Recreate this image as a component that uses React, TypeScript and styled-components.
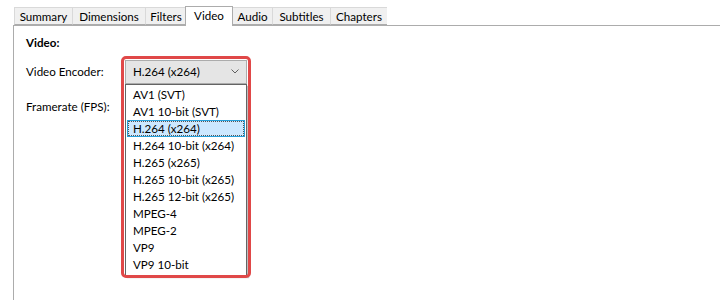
import React, { FC } from "react";
import styled, { createGlobalStyle } from "styled-components";

const encoders = [
  "AV1 (SVT)",
  "AV1 10-bit (SVT)",
  "H.264 (x264)",
  "H.264 10-bit (x264)",
  "H.265 (x265)",
  "H.265 10-bit (x265)",
  "H.265 12-bit (x265)",
  "MPEG-4",
  "MPEG-2",
  "VP9",
  "VP9 10-bit",
];

const tabs = [
  { label: "Summary", width: 58 },
  { label: "Dimensions", width: 73 },
  { label: "Filters", width: 41 },
  { label: "Video", width: 46 },
  { label: "Audio", width: 40 },
  { label: "Subtitles", width: 58 },
  { label: "Chapters", width: 57 },
];

const App: FC = () => {
  return (
    <>
      <GlobalStyle />
      <Window>
        <TabStrip>
          {tabs.map((t) => (
            <Tab key={t.label} $width={t.width} $active={t.label === "Video"}>
              {t.label}
            </Tab>
          ))}
        </TabStrip>
        <Panel>
          <SectionTitle>Video:</SectionTitle>
          <Form>
            <Label>Video Encoder:</Label>
            <EncoderCell>
              <Combo>
                <span>H.264 (x264)</span>
                <svg width="8" height="5" viewBox="0 0 8 5">
                  <path d="M0.5 0.5 L4 4 L7.5 0.5" fill="none" stroke="#606060" strokeWidth="1" />
                </svg>
              </Combo>
              <DropList>
                {encoders.map((e) => (
                  <Option key={e} $selected={e === "H.264 (x264)"}>
                    {e}
                  </Option>
                ))}
              </DropList>
              <Highlight />
            </EncoderCell>
            <Label>Framerate (FPS):</Label>
            <div />
          </Form>
        </Panel>
      </Window>
    </>
  );
};

const GlobalStyle = createGlobalStyle`
  body {
    margin: 0;
    background: #ffffff;
    font-family: "Segoe UI", Lato, "Noto Sans", sans-serif;
    font-size: 11.6px;
    color: #000000;
  }
`;

const Window = styled.div`
  width: 720px;
  height: 300px;
  overflow: hidden;
  padding-top: 6px;
  box-sizing: border-box;
`;

const TabStrip = styled.div`
  display: flex;
  align-items: flex-end;
  padding-left: 14px;
  height: 19px;
  position: relative;
  z-index: 1;
`;

const Tab = styled.div<{ $width: number; $active?: boolean }>`
  box-sizing: border-box;
  width: ${(p) => p.$width + (p.$active ? 2 : 0)}px;
  height: ${(p) => (p.$active ? 20 : 18)}px;
  margin: ${(p) => (p.$active ? "0 -1px -1px" : "0")};
  display: flex;
  align-items: center;
  justify-content: center;
  padding-bottom: ${(p) => (p.$active ? 2 : 0)}px;
  background: ${(p) => (p.$active ? "#ffffff" : "#f0f0f0")};
  border: 1px solid ${(p) => (p.$active ? "#acacac" : "#d9d9d9")};
  border-bottom: ${(p) => (p.$active ? "none" : "1px solid #acacac")};
  border-right: ${(p) => (p.$active ? "1px solid #acacac" : "none")};
  white-space: nowrap;
  position: relative;
  z-index: ${(p) => (p.$active ? 2 : 1)};
`;

const Panel = styled.div`
  margin-left: 13px;
  border-top: 1px solid #acacac;
  border-left: 1px solid #acacac;
  height: 280px;
  padding: 9px 0 0 12px;
`;

const SectionTitle = styled.div`
  font-weight: bold;
  height: 16px;
  line-height: 16px;
`;

const Form = styled.div`
  display: grid;
  grid-template-columns: 99px 122px;
  grid-auto-rows: 35px;
  align-items: center;
  margin-top: 3px;
`;

const Label = styled.div`
  line-height: 16px;
`;

const EncoderCell = styled.div`
  position: relative;
  height: 24px;
`;

const Combo = styled.div`
  box-sizing: border-box;
  height: 24px;
  border: 1px solid #acacac;
  background: #e5e5e5;
  display: flex;
  align-items: center;
  justify-content: space-between;
  padding: 0 7px 0 7px;
`;

const DropList = styled.div`
  position: absolute;
  left: 0;
  top: 24px;
  width: 122px;
  box-sizing: border-box;
  border: 1px solid #646464;
  background: #ffffff;
  padding: 1px 1px 2px;
  box-shadow: 2px 2px 1px rgba(0, 0, 0, 0.25);
  z-index: 2;
`;

const Option = styled.div<{ $selected?: boolean }>`
  height: 17px;
  box-sizing: border-box;
  padding-left: 5px;
  white-space: nowrap;
  background: ${(p) => (p.$selected ? "#cce8ff" : "transparent")};
  border: 1px solid ${(p) => (p.$selected ? "#26a0da" : "transparent")};
  outline: ${(p) => (p.$selected ? "1px dotted #555555" : "none")};
  outline-offset: -2px;
  line-height: 15px;
`;

const Highlight = styled.div`
  position: absolute;
  left: -4px;
  top: -4px;
  width: 130px;
  height: 222px;
  box-sizing: border-box;
  border: 3px solid #e04848;
  border-radius: 5px;
  z-index: 3;
  pointer-events: none;
`;

export default App;
